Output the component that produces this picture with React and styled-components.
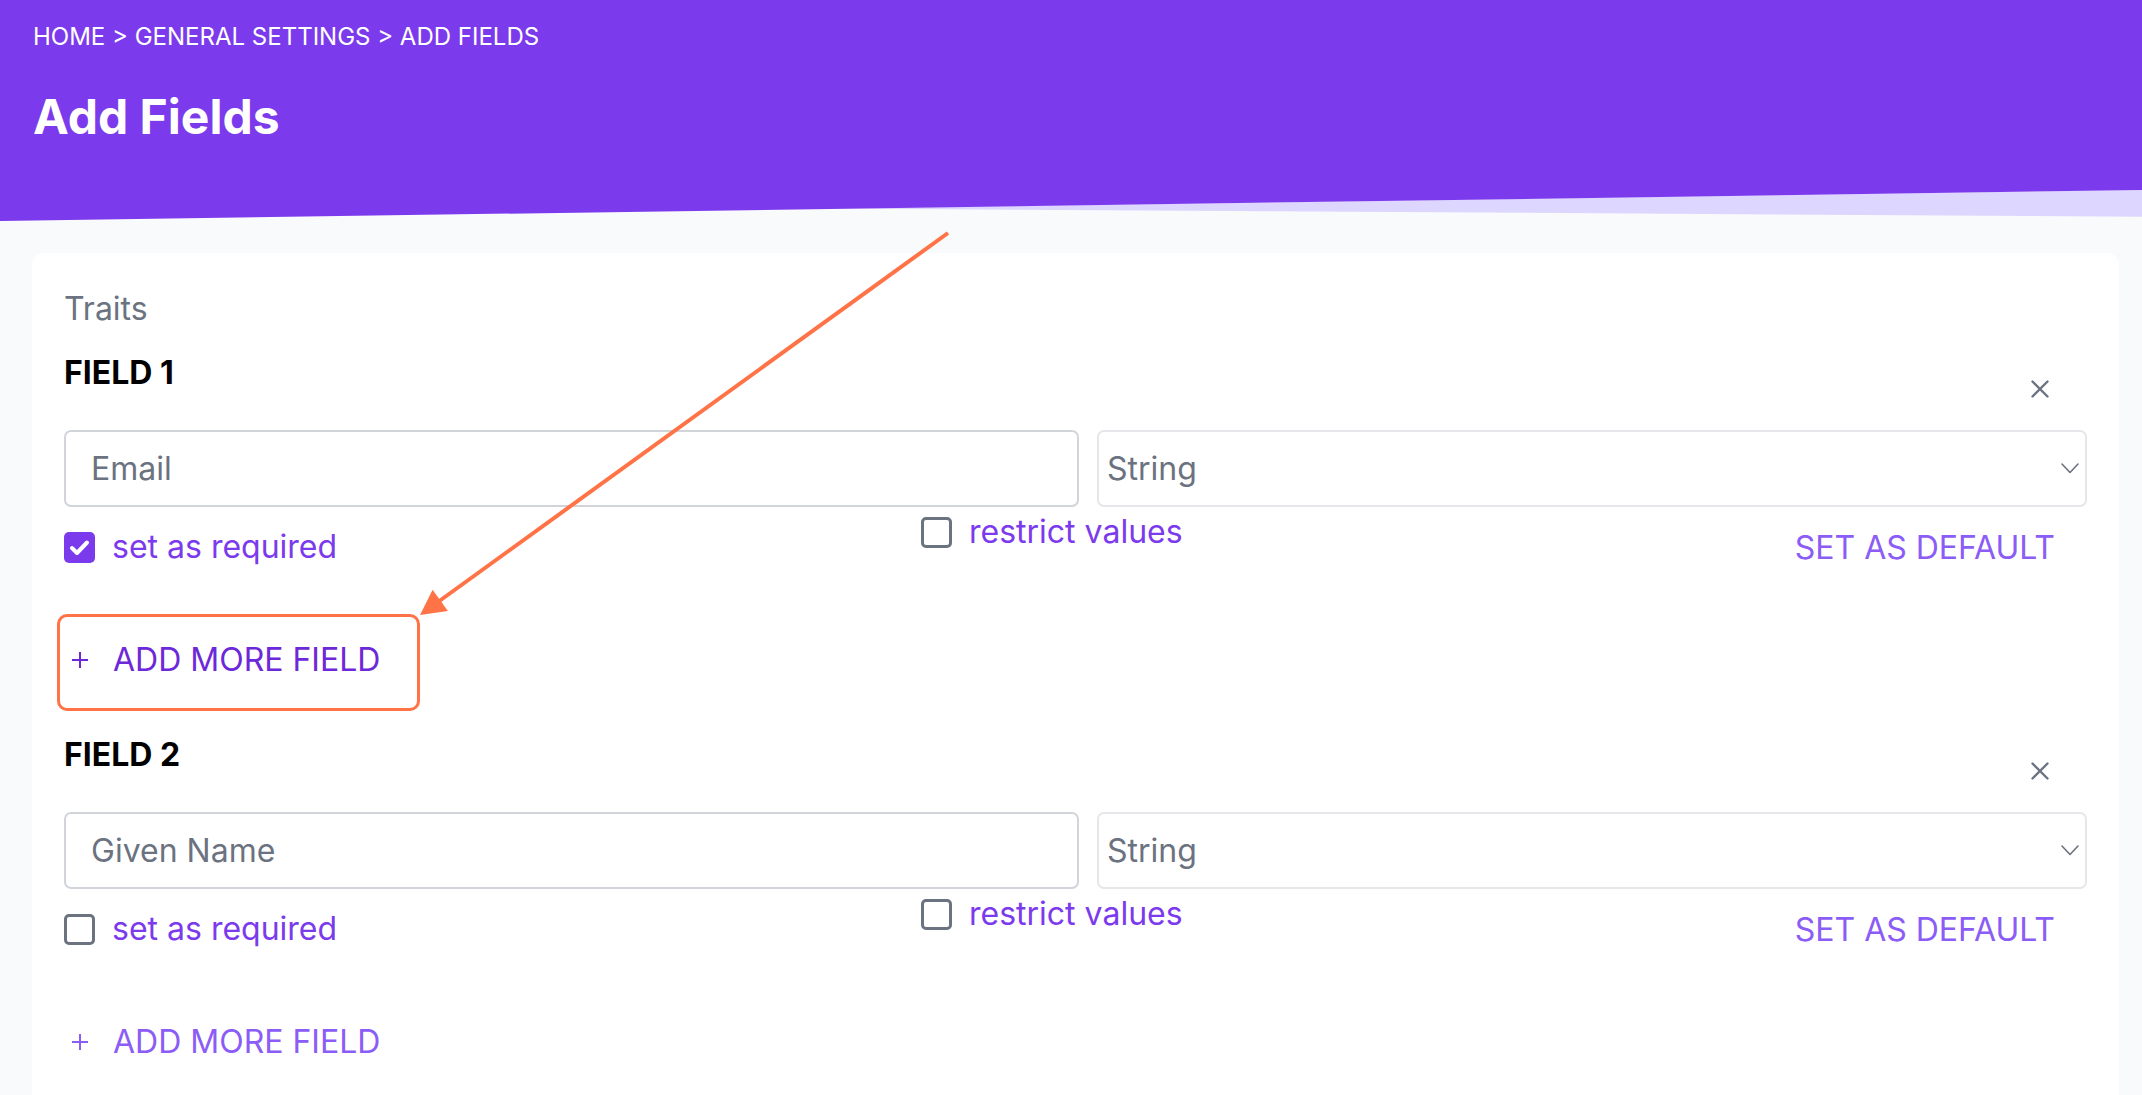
import React from 'react';
import styled, { createGlobalStyle, css } from 'styled-components';

const GlobalStyle = createGlobalStyle`
  html, body {
    margin: 0;
    padding: 0;
    background: #f9fafb;
  }
  body {
    font-family: Inter, 'Noto Sans', sans-serif;
    overflow: hidden;
  }
  * {
    box-sizing: border-box;
  }
`;

const Page = styled.div`
  position: relative;
  height: 1095px;
  overflow: hidden;
  background: #f9fafb;
`;

const Header = styled.header`
  position: relative;
  height: 222px;
  padding: 22px 33px 0;
  color: #fff;
  isolation: isolate;
  &::before {
    content: '';
    position: absolute;
    inset: 0;
    background: #ddd6fe;
    clip-path: polygon(843px 208.6px, 100% 190px, 100% 216.7px);
    z-index: -2;
  }
  &::after {
    content: '';
    position: absolute;
    inset: 0;
    background: #7c3aed;
    clip-path: polygon(0 0, 100% 0, 100% 190px, 0 221px);
    z-index: -1;
  }
`;

const Breadcrumb = styled.div`
  font-size: 24px;
  line-height: 29px;
`;

const Title = styled.h1`
  margin: 37px 0 0;
  font-size: 48px;
  line-height: 58px;
  font-weight: 700;
`;

const Card = styled.main`
  margin: 31px 23px 0 32px;
  padding: 38px 32px 60px;
  background: #fff;
  border-radius: 12px;
`;

const SectionLabel = styled.div`
  font-size: 32px;
  line-height: 36px;
  color: #6b7280;
  margin-bottom: 28px;
`;

const FieldBlock = styled.section`
  display: flex;
  flex-direction: column;
`;

const FieldHead = styled.div`
  display: flex;
  justify-content: space-between;
  align-items: flex-start;
  margin-bottom: 32px;
`;

const FieldTitle = styled.h3`
  margin: 0;
  font-size: 32px;
  line-height: 36px;
  font-weight: 700;
  color: #000;
`;

const CloseButton = styled.button`
  width: 18px;
  height: 18px;
  margin: 25px 38px 0 0;
  padding: 0;
  border: 0;
  background: none;
  color: #6b7280;
  display: flex;
`;

const InputRow = styled.div`
  display: grid;
  grid-template-columns: 1015fr 990fr;
  column-gap: 18px;
  height: 77px;
`;

const TextInput = styled.input`
  height: 100%;
  width: 100%;
  border: 2px solid #d1d5db;
  border-radius: 7px;
  padding: 0 0 0 25px;
  font: inherit;
  font-size: 32px;
  color: #6b7280;
  outline: none;
  background: #fff;
`;

const SelectBox = styled.div`
  height: 100%;
  border: 2px solid #e5e7eb;
  border-radius: 7px;
  padding: 0 6px 0 8px;
  display: flex;
  align-items: center;
  justify-content: space-between;
  font-size: 32px;
  color: #6b7280;
  background: #fff;
`;

const OptionsRow = styled.div`
  display: flex;
  align-items: flex-start;
`;

const CheckLabel = styled.label`
  display: flex;
  align-items: center;
  gap: 17px;
  height: 36px;
  font-size: 32px;
  line-height: 36px;
  color: #7c3aed;
  cursor: pointer;
  ${(p) => p.$lead && css`
    flex: 0 0 857px;
    margin-top: 22px;
  `}
  ${(p) => !p.$lead && css`
    margin-top: 7px;
  `}
`;

const Box = styled.span`
  width: 31px;
  height: 31px;
  flex: 0 0 31px;
  border-radius: 5px;
  display: flex;
  align-items: center;
  justify-content: center;
  ${(p) => (p.$checked
    ? css`
      background: #7c3aed;
    `
    : css`
      border: 3px solid #6b7280;
      background: #fff;
    `)}
`;

const DefaultButton = styled.button`
  margin: 23px 32px 0 auto;
  padding: 0;
  border: 0;
  background: none;
  font: inherit;
  font-size: 32px;
  line-height: 36px;
  color: #8b5cf6;
  text-transform: uppercase;
`;

const AddButton = styled.button`
  position: relative;
  align-self: flex-start;
  display: flex;
  align-items: center;
  gap: 24px;
  height: 36px;
  margin: 76px 0 59px;
  padding: 0 0 0 7px;
  border: 0;
  background: none;
  font: inherit;
  font-size: 32px;
  line-height: 36px;
  color: ${(p) => (p.$active ? '#6d28d9' : '#8b5cf6')};
  ${(p) => p.$highlighted && css`
    &::after {
      content: '';
      position: absolute;
      left: -7px;
      top: -28px;
      width: 357px;
      height: 91px;
      border: 3px solid #ff7346;
      border-radius: 10px;
      pointer-events: none;
    }
  `}
`;

const Annotation = styled.svg`
  position: absolute;
  left: 0;
  top: 0;
  pointer-events: none;
`;

function CheckIcon() {
  return (
    <svg width="31" height="31" viewBox="0 0 31 31" fill="none">
      <path d="M8 16 L13 21 L23 10.5" stroke="#fff" strokeWidth="4" strokeLinecap="round" strokeLinejoin="round" />
    </svg>
  );
}

function XIcon() {
  return (
    <svg width="18" height="18" viewBox="0 0 18 18" fill="none">
      <path d="M1.5 1.5 L16.5 16.5 M16.5 1.5 L1.5 16.5" stroke="currentColor" strokeWidth="2.4" strokeLinecap="round" />
    </svg>
  );
}

function Chevron() {
  return (
    <svg width="18" height="11" viewBox="0 0 18 11" fill="none">
      <path d="M1 1 L9 9.5 L17 1" stroke="#6b7280" strokeWidth="1.6" strokeLinecap="round" strokeLinejoin="round" />
    </svg>
  );
}

function PlusIcon() {
  return (
    <svg width="18" height="18" viewBox="0 0 18 18" fill="none">
      <path d="M9 1 V17 M1 9 H17" stroke="currentColor" strokeWidth="2" />
    </svg>
  );
}

const fields = [
  { id: 1, name: 'Email', type: 'String', required: true },
  { id: 2, name: 'Given Name', type: 'String', required: false },
];

function Field({ index, item }) {
  return (
    <FieldBlock>
      <FieldHead>
        <FieldTitle>{`FIELD ${index + 1}`}</FieldTitle>
        <CloseButton type="button" aria-label="remove field">
          <XIcon />
        </CloseButton>
      </FieldHead>
      <InputRow>
        <TextInput defaultValue={item.name} />
        <SelectBox>
          <span>{item.type}</span>
          <Chevron />
        </SelectBox>
      </InputRow>
      <OptionsRow>
        <CheckLabel $lead>
          <Box $checked={item.required}>{item.required && <CheckIcon />}</Box>
          set as required
        </CheckLabel>
        <CheckLabel>
          <Box />
          restrict values
        </CheckLabel>
        <DefaultButton type="button">Set as default</DefaultButton>
      </OptionsRow>
      <AddButton type="button" $active={index === 0} $highlighted={index === 0}>
        <PlusIcon />
        ADD MORE FIELD
      </AddButton>
    </FieldBlock>
  );
}

export default function App() {
  return (
    <Page>
      <GlobalStyle />
      <Header>
        <Breadcrumb>HOME &gt; GENERAL SETTINGS &gt; ADD FIELDS</Breadcrumb>
        <Title>Add Fields</Title>
      </Header>
      <Card>
        <SectionLabel>Traits</SectionLabel>
        {fields.map((item, index) => (
          <Field key={item.id} index={index} item={item} />
        ))}
      </Card>
      <Annotation width="2142" height="1095" viewBox="0 0 2142 1095">
        <line x1="948" y1="233" x2="438" y2="602" stroke="#ff7346" strokeWidth="4" />
        <polygon points="420,615 432.6,589.8 447.9,610.9" fill="#ff7346" />
      </Annotation>
    </Page>
  );
}
